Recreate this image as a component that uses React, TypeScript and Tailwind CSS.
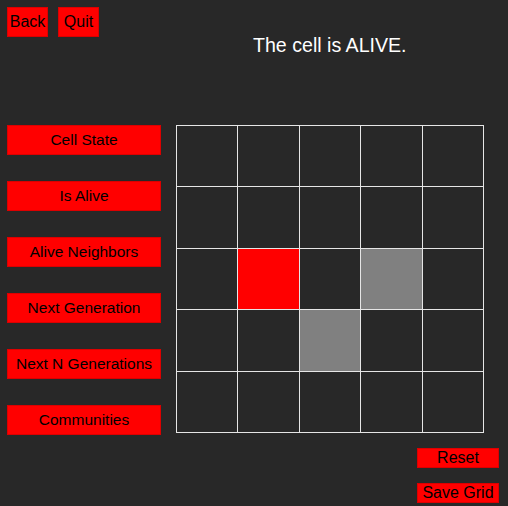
import React from "react";

const font = { fontFamily: '"Liberation Sans", Arial, sans-serif' };

const leftButtons = [
  "Cell State",
  "Is Alive",
  "Alive Neighbors",
  "Next Generation",
  "Next N Generations",
  "Communities",
];

// 0 empty, 1 red, 2 gray
const cells = [
  [0, 0, 0, 0, 0],
  [0, 0, 0, 0, 0],
  [0, 1, 0, 2, 0],
  [0, 0, 2, 0, 0],
  [0, 0, 0, 0, 0],
];

export default function App() {
  return (
    <div
      className="w-[508px] h-[506px] bg-[#282828] flex flex-col text-black overflow-hidden"
      style={font}
    >
      <div className="flex items-start pt-[7px] pl-[7px] h-[57px]">
        <button className="w-[41px] h-[30px] bg-[#ff0000] border border-[#dd0000] text-[16px] leading-none flex items-center justify-center">
          Back
        </button>
        <button className="ml-[10px] w-[41px] h-[30px] bg-[#ff0000] border border-[#dd0000] text-[16px] leading-none flex items-center justify-center">
          Quit
        </button>
        <div className="ml-[154px] mt-[27px] text-white text-[19.6px] leading-[22px] whitespace-nowrap">
          The cell is ALIVE.
        </div>
      </div>
      <div className="flex items-start mt-[68px] pl-[7px]">
        <div className="flex flex-col gap-[26px] w-[154px]">
          {leftButtons.map((b) => (
            <button
              key={b}
              className="h-[30px] w-[154px] bg-[#ff0000] border border-[#dd0000] text-[15.5px] leading-none flex items-center justify-center"
            >
              {b}
            </button>
          ))}
        </div>
        <div className="ml-[15px] w-[308px] h-[308px] bg-[#e6e6e6] p-[1px] grid grid-cols-5 grid-rows-5 gap-[1px]">
          {cells.flat().map((c, i) => (
            <div
              key={i}
              className={
                c === 1
                  ? "bg-[#ff0000]"
                  : c === 2
                  ? "bg-[#808080]"
                  : "bg-[#282828]"
              }
            />
          ))}
        </div>
      </div>
      <div className="flex flex-col items-end pr-[9px] mt-[13px] gap-[15px]">
        <button className="w-[82px] h-[20px] bg-[#ff0000] border border-[#dd0000] text-[16px] leading-none flex items-center justify-center">
          Reset
        </button>
        <button className="w-[82px] h-[20px] bg-[#ff0000] border border-[#dd0000] text-[16px] leading-none flex items-center justify-center">
          Save Grid
        </button>
      </div>
    </div>
  );
}
